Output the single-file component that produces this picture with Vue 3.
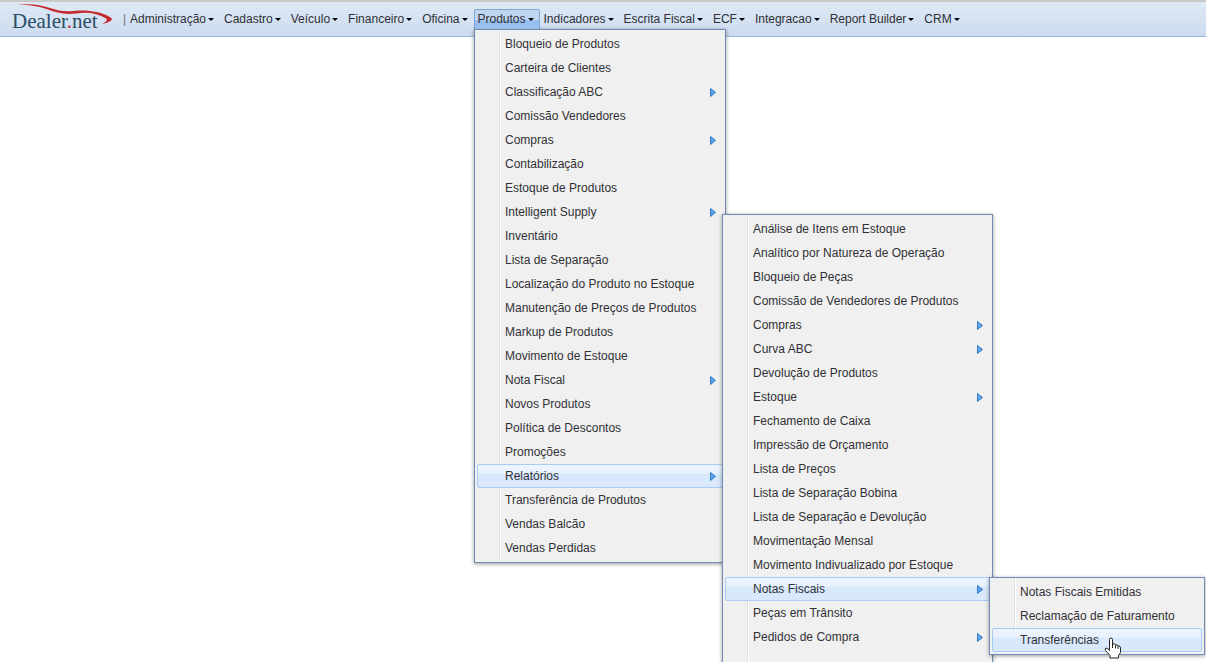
<script setup>
const bar = [
  'Administração', 'Cadastro', 'Veículo', 'Financeiro', 'Oficina', 'Produtos',
  'Indicadores', 'Escrita Fiscal', 'ECF', 'Integracao', 'Report Builder', 'CRM',
]

const item = (label, sub = false, active = false) => ({ label, sub, active })

const menus = [
  {
    name: 'produtos',
    title: 'Produtos',
    items: [
      item('Bloqueio de Produtos'), item('Carteira de Clientes'), item('Classificação ABC', true),
      item('Comissão Vendedores'), item('Compras', true), item('Contabilização'),
      item('Estoque de Produtos'), item('Intelligent Supply', true), item('Inventário'),
      item('Lista de Separação'), item('Localização do Produto no Estoque'),
      item('Manutenção de Preços de Produtos'), item('Markup de Produtos'),
      item('Movimento de Estoque'), item('Nota Fiscal', true), item('Novos Produtos'),
      item('Política de Descontos'), item('Promoções'), item('Relatórios', true, true),
      item('Transferência de Produtos'), item('Vendas Balcão'), item('Vendas Perdidas'),
    ],
  },
  {
    name: 'relatorios',
    title: 'Relatórios',
    items: [
      item('Análise de Itens em Estoque'), item('Analítico por Natureza de Operação'),
      item('Bloqueio de Peças'), item('Comissão de Vendedores de Produtos'),
      item('Compras', true), item('Curva ABC', true), item('Devolução de Produtos'),
      item('Estoque', true), item('Fechamento de Caixa'), item('Impressão de Orçamento'),
      item('Lista de Preços'), item('Lista de Separação Bobina'),
      item('Lista de Separação e Devolução'), item('Movimentação Mensal'),
      item('Movimento Indivualizado por Estoque'), item('Notas Fiscais', true, true),
      item('Peças em Trânsito'), item('Pedidos de Compra', true),
    ],
  },
  {
    name: 'notas',
    title: 'Notas Fiscais',
    items: [
      item('Notas Fiscais Emitidas'), item('Reclamação de Faturamento'),
      item('Transferências', false, true),
    ],
  },
]
</script>

<template>
  <div class="page">
    <header class="toolbar">
      <a class="logo" href="#" aria-label="Dealer.net">
        <span class="brand">Dealer<span class="dot">.</span>net</span>
        <svg class="swoosh" viewBox="0 0 96 24" aria-hidden="true">
          <path d="M0 1C12-1 22 1 32 4C40 6.500 46 8 56 7C70 5.500 82 8 90 12C94 14 95 15 93 16.500C91 18 89 19 84 20C88 17.500 90 16 88 14.500C80 9.500 70 7.800 58 9.500C46 11 38 8.500 30 5.500C20 2 12 .5 0 1Z" fill="#c5282d" />
        </svg>
      </a>
      <span class="divider">|</span>
      <nav class="bar" aria-label="Menu principal">
        <button v-for="label in bar" :key="label" type="button" class="bar-item" :class="{ open: label === 'Produtos' }">
          {{ label }}<span class="caret"></span>
        </button>
      </nav>
    </header>

    <ul v-for="menu in menus" :key="menu.name" class="menu" :class="menu.name" :aria-label="menu.title">
      <li v-for="entry in menu.items" :key="entry.label">
        <button type="button" class="entry" :class="{ active: entry.active }">
          <span>{{ entry.label }}</span>
          <svg v-if="entry.sub" class="arrow" viewBox="0 0 6 9" aria-hidden="true">
            <path d="M.5.500 5.500 4.500.500 8.500Z" fill="#5aa5ee" stroke="#3579c4" />
          </svg>
        </button>
      </li>
    </ul>

    <svg class="pointer" viewBox="0 0 17 22" aria-hidden="true">
      <path d="M5.500 13.500V2.500Q5.500 1 7 1T8.500 2.500V7.500Q10.500 5.500 11.500 8Q13.500 7 14 9Q16.500 8.500 16.500 11V15.500L14.500 18.500V21H6V18.500L1.500 13.500Q.5 11.500 2 11Q4 11 5.500 13.500Z" fill="#fff" stroke="#222" />
      <path d="M8.500 7V11M11.500 8V11.500M14 9V12" fill="none" stroke="#222" />
    </svg>
  </div>
</template>

<style>
body {
  margin: 0;
  background: #fff;
}
</style>

<style scoped>
.page {
  position: relative;
  min-height: 100vh;
  overflow: hidden;
  font: 12px/16px "Liberation Sans", Arial, sans-serif;
  color: #303036;
}
button {
  font: inherit;
  color: inherit;
  border: 0;
  background: none;
  white-space: nowrap;
  text-align: left;
}
.toolbar {
  display: flex;
  align-items: center;
  box-sizing: border-box;
  height: 37px;
  padding-left: 12px;
  border-top: 2px solid #c9c9c7;
  border-bottom: 1px solid #99bbd8;
  background: linear-gradient(#dfe9f5, #cbdbef);
}
.logo {
  position: relative;
  width: 111px;
  color: #284f66;
  text-decoration: none;
}
.brand {
  display: block;
  padding-top: 4px;
  font: 21px/24px "Liberation Serif", "Times New Roman", serif;
}
.dot {
  color: #c5282d;
}
.swoosh {
  position: absolute;
  left: 6px;
  top: -1px;
  width: 96px;
  height: 24px;
}
.divider {
  width: 3px;
  color: #777;
}
.bar {
  display: flex;
}
.bar-item {
  display: flex;
  align-items: center;
  box-sizing: border-box;
  height: 21px;
  padding: 0 5px 0 3px;
  border: 1px solid transparent;
  border-radius: 2px;
}
.bar-item.open {
  border-color: #7da5d6;
  background: linear-gradient(#bfd5f0 0 55%, #96bff0 55% 80%, #aad0f8);
}
.caret {
  margin-left: 2px;
  border: 3px solid transparent;
  border-top-color: #000;
  border-bottom: 0;
}
.menu {
  position: absolute;
  box-sizing: border-box;
  margin: 0;
  padding: 2px;
  list-style: none;
  border: 1px solid #718bb7;
  background: linear-gradient(90deg, transparent 24px, #e0e0e0 24px 25px, #fff 25px 26px, transparent 26px) #f0f0f0;
  box-shadow: 0 1px 4px rgb(0 0 0 / 40%);
}
.produtos {
  left: 474px;
  top: 29px;
  width: 252px;
}
.relatorios {
  left: 722px;
  top: 214px;
  width: 271px;
  padding-bottom: 24px;
}
.notas {
  left: 989px;
  top: 577px;
  width: 216px;
}
.entry {
  display: flex;
  align-items: center;
  justify-content: space-between;
  box-sizing: border-box;
  width: 100%;
  height: 24px;
  padding: 0 6px 0 27px;
  border: 1px solid transparent;
  border-radius: 2px;
}
.entry.active {
  border-color: #a9cbf5;
  background: linear-gradient(#edf5fe 0, #e6f0fd 40%, #d8e8fb 40%, #d9e8fb);
}
.arrow {
  width: 6px;
  height: 9px;
}
.pointer {
  position: absolute;
  left: 1104px;
  top: 637px;
  width: 17px;
  height: 22px;
}
</style>
